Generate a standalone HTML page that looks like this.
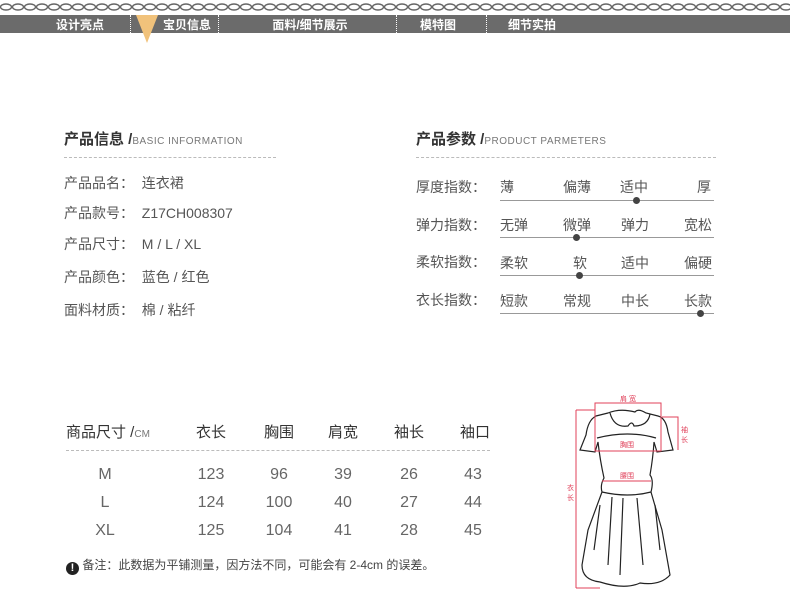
<!DOCTYPE html><html><head><meta charset="utf-8"><style>
*{margin:0;padding:0}body{width:790px;height:598px;background:#fff;position:relative;overflow:hidden;font-family:"Liberation Sans","Noto Sans CJK SC",sans-serif;color:#555}
.a{position:absolute;white-space:nowrap}
.nav{position:absolute;left:0;top:15px;width:790px;height:18px;background:#6b6b6b}
.nav span{position:absolute;top:1px;color:#fff;font-size:12px;font-weight:bold;transform:translateX(-50%)}
.sep{position:absolute;top:15px;height:18px;border-left:1px dotted #fff}
.t{font-size:15px;font-weight:bold;color:#333}.t small{font-size:10px;font-weight:normal;color:#777;letter-spacing:.5px}
.dl{position:absolute;border-top:1px dashed #bbb;height:0}
.r{font-size:14px}
.ln{position:absolute;height:1px;background:#999;left:500px;width:214px}
.dot{position:absolute;width:7px;height:7px;border-radius:50%;background:#444}
.c{position:absolute;transform:translateX(-50%);font-size:16px;white-space:nowrap;color:#666}
</style></head><body>
<svg class="a" style="left:0;top:0" width="790" height="14"><defs><pattern id="p" width="12" height="14" patternUnits="userSpaceOnUse"><ellipse cx="6" cy="7" rx="5.5" ry="3" fill="none" stroke="#666" stroke-width="1.4"/></pattern></defs><rect width="790" height="14" fill="url(#p)"/></svg>
<div class="nav"><span style="left:80px">设计亮点</span><span style="left:187px">宝贝信息</span><span style="left:310px">面料/细节展示</span><span style="left:438px">模特图</span><span style="left:532px">细节实拍</span></div>
<div class="sep" style="left:130px"></div><div class="sep" style="left:218px"></div><div class="sep" style="left:396px"></div><div class="sep" style="left:486px"></div>
<svg class="a" style="left:136px;top:15px" width="24" height="29"><polygon points="0,0 22,0 11,28" fill="#f1c27b"/></svg>

<div class="a t" style="left:64px;top:128px">产品信息 /<small>BASIC INFORMATION</small></div>
<div class="dl" style="left:64px;top:157px;width:212px"></div>
<div class="a r" style="left:64px;top:173px">产品品名：&nbsp; 连衣裙</div>
<div class="a r" style="left:64px;top:203px">产品款号：&nbsp; Z17CH008307</div>
<div class="a r" style="left:64px;top:234px">产品尺寸：&nbsp; M / L / XL</div>
<div class="a r" style="left:64px;top:267px">产品颜色：&nbsp; 蓝色 / 红色</div>
<div class="a r" style="left:64px;top:300px">面料材质：&nbsp; 棉 / 粘纤</div>

<div class="a t" style="left:416px;top:128px">产品参数 /<small>PRODUCT PARMETERS</small></div>
<div class="dl" style="left:416px;top:157px;width:300px"></div>
<div class="a r" style="left:416px;top:177px">厚度指数：</div>
<div class="a r" style="left:500px;top:177px">薄</div><div class="a r" style="left:563px;top:177px">偏薄</div><div class="a r" style="left:620px;top:177px">适中</div><div class="a r" style="left:697px;top:177px">厚</div>
<div class="ln" style="top:200px"></div><div class="dot" style="left:633px;top:197px"></div>
<div class="a r" style="left:416px;top:215px">弹力指数：</div>
<div class="a r" style="left:500px;top:215px">无弹</div><div class="a r" style="left:563px;top:215px">微弹</div><div class="a r" style="left:621px;top:215px">弹力</div><div class="a r" style="left:684px;top:215px">宽松</div>
<div class="ln" style="top:237px"></div><div class="dot" style="left:573px;top:234px"></div>
<div class="a r" style="left:416px;top:252px">柔软指数：</div>
<div class="a r" style="left:500px;top:253px">柔软</div><div class="a r" style="left:573px;top:253px">软</div><div class="a r" style="left:621px;top:253px">适中</div><div class="a r" style="left:684px;top:253px">偏硬</div>
<div class="ln" style="top:275px"></div><div class="dot" style="left:576px;top:272px"></div>
<div class="a r" style="left:416px;top:290px">衣长指数：</div>
<div class="a r" style="left:500px;top:291px">短款</div><div class="a r" style="left:563px;top:291px">常规</div><div class="a r" style="left:621px;top:291px">中长</div><div class="a r" style="left:684px;top:291px">长款</div>
<div class="ln" style="top:313px"></div><div class="dot" style="left:697px;top:310px"></div>

<div class="a" style="left:66px;top:421px;font-size:15px;color:#333">商品尺寸 /<span style="font-size:10px;color:#777">CM</span></div>
<div class="c" style="left:211px;top:421px;font-size:15px;color:#333">衣长</div><div class="c" style="left:279px;top:421px;font-size:15px;color:#333">胸围</div><div class="c" style="left:343px;top:421px;font-size:15px;color:#333">肩宽</div><div class="c" style="left:409px;top:421px;font-size:15px;color:#333">袖长</div><div class="c" style="left:475px;top:421px;font-size:15px;color:#333">袖口</div>
<div class="dl" style="left:66px;top:450px;width:424px"></div>
<div class="c" style="left:105px;top:466px">M</div><div class="c" style="left:211px;top:466px">123</div><div class="c" style="left:279px;top:466px">96</div><div class="c" style="left:343px;top:466px">39</div><div class="c" style="left:409px;top:466px">26</div><div class="c" style="left:473px;top:466px">43</div>
<div class="c" style="left:105px;top:494px">L</div><div class="c" style="left:211px;top:494px">124</div><div class="c" style="left:279px;top:494px">100</div><div class="c" style="left:343px;top:494px">40</div><div class="c" style="left:409px;top:494px">27</div><div class="c" style="left:473px;top:494px">44</div>
<div class="c" style="left:105px;top:522px">XL</div><div class="c" style="left:211px;top:522px">125</div><div class="c" style="left:279px;top:522px">104</div><div class="c" style="left:343px;top:522px">41</div><div class="c" style="left:409px;top:522px">28</div><div class="c" style="left:473px;top:522px">45</div>
<div class="a" style="left:66px;top:556px;font-size:12px;color:#444"><span style="display:inline-block;width:13px;height:13px;border-radius:50%;background:#222;color:#fff;font-size:11px;font-weight:bold;text-align:center;line-height:13px;vertical-align:-2px">!</span> 备注：此数据为平铺测量，因方法不同，可能会有 2-4cm 的误差。</div>

<svg class="a" style="left:540px;top:380px" width="160" height="210" fill="none" stroke="#222" stroke-width="1.2">
<path d="M95,32 Q80,28 68,33 L56,36 Q48,40 46,55 L40,70 L55,72 L58,62 Q60,80 64,98 Q60,105 62,112 L48,150 L42,185 Q42,200 60,202 Q85,210 100,203 Q120,206 130,195 L122,150 L111,112 Q114,100 110,95 Q113,78 114,62 L117,72 L133,70 L128,52 Q126,38 118,36 L106,33 Q98,28 95,32Z"/>
<path d="M70,33 Q74,48 88,46 Q92,40 94,46 Q108,46 110,34"/>
<path d="M57,58 Q88,50 116,58"/>
<path d="M62,112 Q88,118 111,112"/>
<path d="M60,125 L54,170 M72,117 L68,185 M97,118 L103,185 M115,125 L120,170 M83,118 L80,195"/>
<g stroke="#e0405a" stroke-width="1"><rect x="55" y="23" width="66" height="48"/><path d="M36,30 V208 M36,30 H55 M36,208 H60 M122,37 H138 V70 M62,101 H111"/></g>
<g fill="#e0405a" stroke="none" font-size="7"><text x="80" y="21">肩 宽</text><text x="80" y="67">胸围</text><text x="80" y="98">腰围</text><text x="141" y="52">袖</text><text x="141" y="62">长</text><text x="27" y="110">衣</text><text x="27" y="120">长</text></g>
</svg>
</body></html>
